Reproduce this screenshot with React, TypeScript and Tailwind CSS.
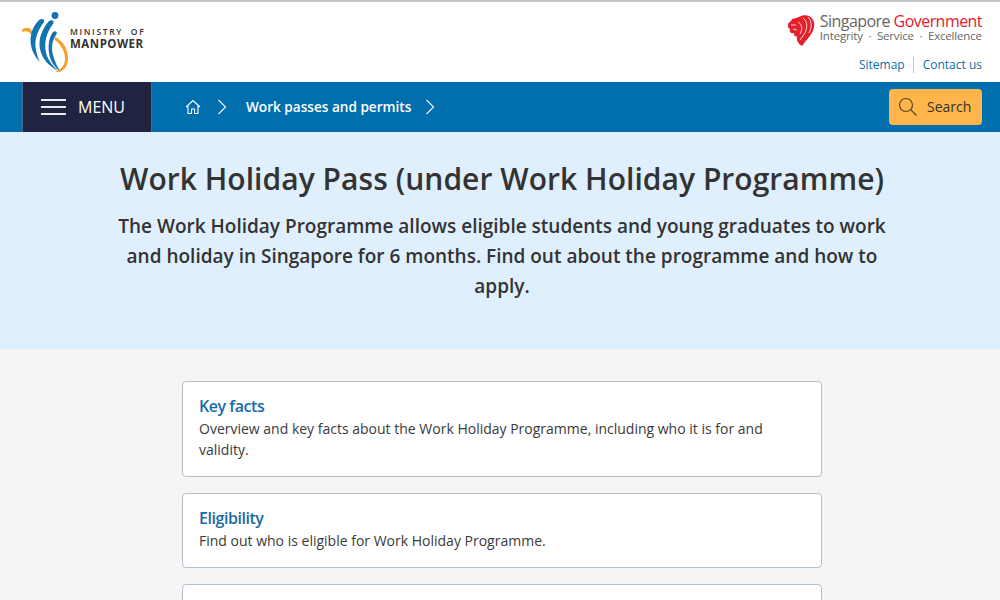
const sans = { fontFamily: '"Open Sans", "Noto Sans", sans-serif' }

const cards = [
  {
    title: 'Key facts',
    text: 'Overview and key facts about the Work Holiday Programme, including who it is for and validity.',
  },
  { title: 'Eligibility', text: 'Find out who is eligible for Work Holiday Programme.' },
  { title: 'Before you apply', text: 'Find out what you need to prepare before applying for the pass.' },
]

function MomLogo() {
  return (
    <svg width="46" height="62" viewBox="0 0 46 62" fill="none">
      <circle cx="33" cy="3.5" r="3.4" fill="#1273b0" />
      <path d="M0 18 C3 15 8 15 10 19 C11 21 11 24 11 27 C10 23 8 20 5 19.5 C3 19 1 19.5 0 20.5 Z" fill="#f5a02c" />
      <path d="M17 8 C20 6 23 7 22 10 C15 19 12 29 14 38 C15 43 16 46 18 50 C11 43 7 33 9 23 C10 17 13 12 17 8 Z" fill="#1273b0" />
      <path d="M27 9 C30 7 33 9 31 12 C24 21 22 31 24 41 C26 48 30 53 36 59 C27 54 20 47 18 37 C16 27 20 17 27 9 Z" fill="#1273b0" />
      <path d="M31 20 C34 18 36 20 34 23 C30 29 29 36 31 43 C33 50 35 55 39 60 C33 56 28 49 27 41 C26 33 27 25 31 20 Z" fill="#1273b0" />
      <path d="M33 25 C40 28 46 36 46 46 C46 56 40 61 33 60 C38 58 43 54 43 47 C43 38 38 32 33 28 Z" fill="#f5a02c" />
    </svg>
  )
}

function Lion() {
  return (
    <svg width="27" height="31" viewBox="0 0 27 31" className="mt-[2px]">
      <path
        d="M0 9 C1 7 3 7 4 4 C7 3 9 3 11 2 C14 0 18 0 21 1 C25 3 27 7 26 12 C25 19 19 24 14 31 C10 29 8 25 9 21 C7 22 6 21 6 18 C3 19 1 17 2 14 C0 13 -1 11 0 9 Z"
        fill="#e3202c"
      />
      <path d="M15 3 C19 6 20 11 17 18 L12 25 M10 7 C14 9 15 14 12 19 M20 2 C24 6 24 12 21 18" stroke="#fff" strokeWidth="0.8" fill="none" />
      <path d="M3 10 L8 10 M5 14 L9 15" stroke="#fff" strokeWidth="0.8" />
    </svg>
  )
}

function Chevron() {
  return (
    <svg width="10" height="16" viewBox="0 0 10 16" fill="none" stroke="#fff" strokeWidth="1.2" className="opacity-90">
      <path d="M1.5 1 L8.5 8 L1.5 15" />
    </svg>
  )
}

export default function App() {
  return (
    <div className="h-[600px] overflow-hidden bg-[#f5f5f5] text-[#333]" style={sans}>
      <header className="h-[82px] bg-white border-t-2 border-[#c4c4c4] flex justify-between pl-[22px] pr-[18px]">
        <div className="flex items-start pt-[10px]">
          <MomLogo />
          <div className="text-[#333] pt-[14px] ml-[2px]">
            <div className="text-[8.5px] leading-[11px] tracking-[1.68px] font-semibold whitespace-pre">MINISTRY  OF</div>
            <div className="text-[11.5px] leading-[13px] tracking-[0.5px] font-bold">MANPOWER</div>
          </div>
        </div>
        <div className="flex flex-col items-end pt-[11px]">
          <div className="flex items-start gap-[5px]">
            <Lion />
            <div className="text-[#666]">
              <div className="text-[16px] leading-[16px] tracking-[-0.55px] whitespace-nowrap">
                Singapore <span className="text-[#e3202c]">Government</span>
              </div>
              <div className="text-[11.5px] leading-[13px] tracking-[-0.17px] whitespace-nowrap">Integrity &nbsp;·&nbsp; Service &nbsp;·&nbsp; Excellence</div>
            </div>
          </div>
          <div className="flex items-center mt-[11px] text-[12px] leading-[16px] text-[#0f6fa8]">
            <span className="pr-[8px] border-r border-[#bcc8d2]">Sitemap</span>
            <span className="pl-[9px]">Contact us</span>
          </div>
        </div>
      </header>

      <nav className="h-[50px] bg-[#016fad] flex items-center pl-[22px] pr-[18px] text-white">
        <div className="h-full w-[130px] bg-[#1f2540] border-x border-[#4a6c94] flex items-center pl-[18px] gap-[12px] shrink-0">
          <div className="w-[25px] flex flex-col gap-[5px]">
            <div className="h-[2px] bg-white/90" />
            <div className="h-[2px] bg-white/90" />
            <div className="h-[2px] bg-white/90" />
          </div>
          <span className="text-[16px] font-medium">MENU</span>
        </div>
        <div className="flex items-center ml-[33px]">
          <svg width="16" height="16" viewBox="0 0 16 16" fill="none" stroke="#fff" strokeWidth="1.1">
            <path d="M1 8 L8 1.5 L15 8 M3 6.5 V14.5 H6.5 V10 H9.5 V14.5 H13 V6.5" />
          </svg>
          <span className="ml-[16px]"><Chevron /></span>
          <span className="ml-[19px] text-[13.6px] leading-[18px] font-semibold -mt-[1px]">Work passes and permits</span>
          <span className="ml-[14px]"><Chevron /></span>
        </div>
        <div className="ml-auto h-[36px] w-[93px] rounded-[4px] bg-[#ffb54a] flex items-center pl-[9px] gap-[9px] text-[#333]">
          <svg width="20" height="20" viewBox="0 0 20 20" fill="none" stroke="#5a4a2a" strokeWidth="1.2">
            <circle cx="8" cy="8" r="6.5" />
            <path d="M13 13 L18.5 18.5" />
          </svg>
          <span className="text-[14px] leading-[18px] -mt-[1px]">Search</span>
        </div>
      </nav>

      <section className="h-[217px] bg-[#dfeffd] flex flex-col items-center pt-[27px] pl-[4px]">
        <h1 className="text-[30px] leading-[40px] font-semibold tracking-[0.04px] text-center">Work Holiday Pass (under Work Holiday Programme)</h1>
        <p className="w-[790px] mt-[12px] text-[19px] leading-[30px] font-semibold text-center">
          The Work Holiday Programme allows eligible students and young graduates to work and holiday in Singapore for 6 months. Find out about the programme and how to apply.
        </p>
      </section>

      <main className="flex flex-col items-center gap-[16px] pt-[32px] pl-[4px]">
        {cards.map((c) => (
          <div key={c.title} className="w-[640px] bg-white border border-[#b4c0cc] rounded-[4px] px-[16px] pt-[13px] pb-[16px]">
            <div className="text-[16px] leading-[23px] font-semibold tracking-[-0.45px] text-[#1a6aa5]">{c.title}</div>
            <div className="text-[14px] leading-[21px] text-[#3a3a3a]">{c.text}</div>
          </div>
        ))}
      </main>
    </div>
  )
}
